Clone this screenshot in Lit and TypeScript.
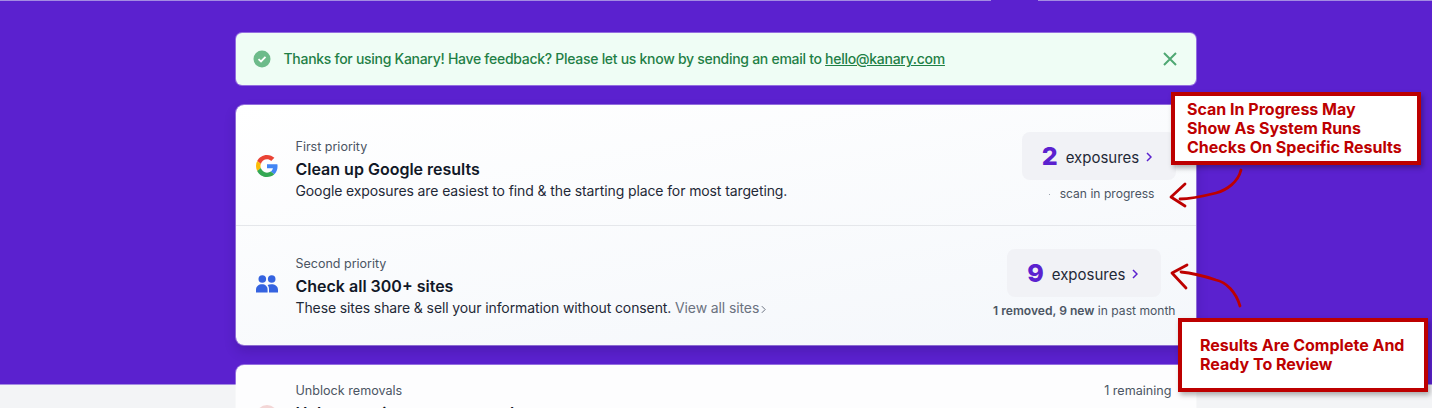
import { LitElement, css, html, svg } from "lit";
import { customElement } from "lit/decorators.js";

const chevron = (width: number, height: number, color: string, weight = 1.5) =>
  html`<svg width=${width} height=${height} viewBox="0 0 6 10" fill="none" stroke=${color} stroke-width=${weight}><path d="M1 1l4 4-4 4" /></svg>`;

const googleIcon = svg`
  <svg width="22" height="22" viewBox="0 0 48 48">
    <path fill="#EA4335" d="M24 9.500c3.500 0 6.700 1.200 9.200 3.600l6.900-6.900C35.900 2.400 30.500 0 24 0 14.600 0 6.500 5.400 2.600 13.200l8 6.200C12.400 13.700 17.700 9.500 24 9.500z"/>
    <path fill="#4285F4" d="M47 24.500c0-1.600-.1-3.100-.4-4.500H24v9h12.900c-.6 3-2.200 5.500-4.700 7.200l7.700 6C44.400 38 47 31.800 47 24.500z"/>
    <path fill="#FBBC05" d="M10.500 28.600c-.5-1.400-.8-3-.8-4.600s.3-3.200.8-4.600l-8-6.200C.9 16.500 0 20.100 0 24s.9 7.500 2.600 10.800l7.900-6.200z"/>
    <path fill="#34A853" d="M24 48c6.500 0 11.900-2.100 15.900-5.800l-7.700-6c-2.200 1.400-4.900 2.300-8.200 2.300-6.300 0-11.600-4.200-13.500-10l-8 6.200C6.500 42.600 14.600 48 24 48z"/>
  </svg>
`;

const peopleIcon = svg`
  <svg width="22" height="18" viewBox="0 0 22 18" fill="#3563e0">
    <circle cx="6.300" cy="4" r="3.800"/>
    <circle cx="15.700" cy="4" r="3.800"/>
    <path d="M0 17.500v-2.800C0 11.300 2.800 9.300 6 9.300s5.600 2 5.600 5.400v2.800z"/>
    <path d="M13 17.500v-3c0-1.800-.5-3.300-1.400-4.400 1-.5 2.300-.8 3.700-.8 3.700 0 6.700 2 6.700 5.400v2.800z"/>
  </svg>
`;

@customElement("app-root")
export class AppRoot extends LitElement {
  static styles = css`
    :host {
      display: block;
      height: 408px;
      overflow: hidden;
      position: relative;
      background: linear-gradient(#5b21cf 0 384px, #a48be2 384px 385px, #f3f4f6 385px);
      font-family: Inter, "Liberation Sans", sans-serif;
      color: #1f2937;
    }
    .top-line {
      position: absolute;
      top: 0;
      left: 0;
      right: 0;
      height: 1px;
      background: linear-gradient(90deg, #a48be2 0 991px, #5b21cf 991px 1038px, #a48be2 1038px);
    }
    .column {
      margin: 0 0 0 235.5px;
      padding-top: 32.5px;
      width: 960px;
      display: flex;
      flex-direction: column;
      gap: 20px;
    }
    .alert {
      height: 52px;
      box-sizing: border-box;
      padding: 0 17px;
      display: flex;
      align-items: center;
      background: #effdf5;
      border-radius: 6px;
      box-shadow: 0 0 0 1px rgba(255, 255, 255, 0.35);
      color: #1f8046;
      font-size: 14px;
      font-weight: 500;
      letter-spacing: -0.285px;
    }
    .alert-text {
      margin-left: 13px;
      flex: 1;
    }
    .alert a {
      color: inherit;
      text-decoration: underline;
    }
    .card {
      background: linear-gradient(170deg, #ffffff 0%, #f4f7fb 100%);
      border-radius: 8px;
      box-shadow: 0 0 0 1px rgba(255, 255, 255, 0.35), 0 6px 12px rgba(30, 10, 80, 0.22);
    }
    .row {
      display: flex;
      align-items: center;
      height: 120.500px;
      box-sizing: border-box;
      padding: 0 20px;
    }
    .row + .row {
      height: 120.300px;
      border-top: 1px solid #e5e7eb;
    }
    .row-icon {
      width: 40px;
      display: flex;
      align-items: center;
    }
    .row-icon.google {
      margin-top: 2px;
    }
    .row-icon.people {
      margin-top: -4px;
    }
    .row-body {
      flex: 1;
      display: flex;
      flex-direction: column;
    }
    .row-body.first {
      margin-top: 8px;
    }
    .eyebrow {
      font-size: 12.500px;
      line-height: 20px;
      color: #4b5563;
    }
    .title {
      font-size: 16px;
      font-weight: 600;
      line-height: 24px;
      color: #111827;
    }
    .desc {
      font-size: 14px;
      line-height: 20px;
      letter-spacing: -0.11px;
      color: #1f2937;
    }
    .view-all {
      color: #6b7280;
    }
    .view-all svg {
      margin-left: 2px;
      vertical-align: -1px;
    }
    .stat {
      display: flex;
      flex-direction: column;
      align-items: center;
      gap: 6px;
    }
    .stat.first {
      align-items: flex-end;
      margin-top: 5px;
    }
    .stat.first .stat-note {
      margin-right: 21px;
    }
    .stat.second {
      padding-bottom: 3px;
    }
    .stat-btn {
      display: flex;
      align-items: center;
      justify-content: center;
      height: 48px;
      width: 154px;
      box-sizing: border-box;
      padding-right: 3px;
      border-radius: 8px;
      background: #f1f2f6;
      color: #1f2937;
      font-size: 15px;
    }
    .stat-count {
      font-size: 25px;
      font-weight: 800;
      color: #5b21cf;
      margin-right: 8px;
    }
    .stat-label {
      margin-top: 2px;
    }
    .stat-btn svg {
      margin-left: 7px;
      margin-top: 2px;
    }
    .stat-note {
      font-size: 12.100px;
      line-height: 16px;
      color: #4b5563;
    }
    .stat-note b {
      font-weight: 600;
    }
    .dot {
      display: inline-block;
      width: 1px;
      height: 1px;
      background: #9ca3af;
      margin-right: 10px;
      vertical-align: middle;
    }
    .peek {
      height: 80px;
      box-sizing: border-box;
      padding: 16px 24px 0 60px;
      background: #fdfdfe;
      border-radius: 8px 8px 0 0;
      box-shadow: 0 0 0 1px rgba(255, 255, 255, 0.35);
      position: relative;
    }
    .peek-top {
      display: flex;
      justify-content: space-between;
      font-size: 12.600px;
      line-height: 20px;
      color: #4b5563;
    }
    .peek-title {
      font-size: 16px;
      font-weight: 600;
      line-height: 24px;
      color: #111827;
    }
    .peek-icon {
      position: absolute;
      left: 20px;
      top: 40px;
      width: 22px;
      height: 22px;
      border-radius: 50%;
      background: #f3d6d6;
    }
    .note {
      position: absolute;
      box-sizing: border-box;
      background: #fff;
      border: 4px solid #bd0000;
      box-shadow: 2px 3px 5px rgba(0, 0, 0, 0.3);
      color: #bd0000;
      font-size: 16px;
      font-weight: 700;
      line-height: 19px;
      display: flex;
      flex-direction: column;
      justify-content: center;
    }
    .note.scan {
      left: 1171px;
      top: 92px;
      width: 250px;
      height: 73px;
      padding-left: 12px;
    }
    .note.done {
      left: 1178px;
      top: 318px;
      width: 250px;
      height: 74px;
      padding-left: 18px;
    }
    .arrows {
      position: absolute;
      left: 0;
      top: 0;
      pointer-events: none;
    }
  `;

  render() {
    return html`
      <div class="top-line"></div>
      <div class="column">
        <div class="alert">
          <svg width="18" height="18" viewBox="0 0 18 18">
            <circle cx="9" cy="9" r="8.500" fill="#6dbb8a" />
            <path d="M5.500 9.200 8 11.500l4.500-4.600" fill="none" stroke="#fff" stroke-width="1.800" />
          </svg>
          <span class="alert-text">
            Thanks for using Kanary! Have feedback? Please let us know by sending an email to
            <a href="#">hello@kanary.com</a>
          </span>
          <svg width="18" height="18" viewBox="0 0 18 18" fill="none" stroke="#4fa873" stroke-width="2">
            <path d="M3 3 15 15M15 3 3 15" />
          </svg>
        </div>
        <div class="card">
          <div class="row">
            <div class="row-icon google">${googleIcon}</div>
            <div class="row-body first">
              <span class="eyebrow">First priority</span>
              <span class="title">Clean up Google results</span>
              <span class="desc">Google exposures are easiest to find &amp; the starting place for most targeting.</span>
            </div>
            <div class="stat first">
              <div class="stat-btn">
                <span class="stat-count">2</span><span class="stat-label">exposures</span>${chevron(6, 10, "#5b21cf")}
              </div>
              <div class="stat-note"><span class="dot"></span>scan in progress</div>
            </div>
          </div>
          <div class="row">
            <div class="row-icon people">${peopleIcon}</div>
            <div class="row-body">
              <span class="eyebrow">Second priority</span>
              <span class="title">Check all 300+ sites</span>
              <span class="desc">
                These sites share &amp; sell your information without consent.
                <span class="view-all">View all sites${chevron(5, 9, "#6b7280", 1.2)}</span>
              </span>
            </div>
            <div class="stat second">
              <div class="stat-btn">
                <span class="stat-count">9</span><span class="stat-label">exposures</span>${chevron(6, 10, "#5b21cf")}
              </div>
              <div class="stat-note"><b>1 removed, 9 new</b> in past month</div>
            </div>
          </div>
        </div>
        <div class="peek">
          <div class="peek-icon"></div>
          <div class="peek-top"><span>Unblock removals</span><span>1 remaining</span></div>
          <div class="peek-title">Help us review your removal</div>
        </div>
      </div>

      <svg class="arrows" width="1432" height="408" fill="none" stroke="#bd0000" stroke-width="2.800" stroke-linecap="round" stroke-linejoin="round">
        <path d="M1241 170c-3 12-14 20-25 23-12 3-24 6-36 6" />
        <path d="M1185 184 1171 197l14 9" />
        <path d="M1240 306c-4-14-14-24-24-26-12-4-24-7-35-8" />
        <path d="M1187 265 1172 273l14 15" />
      </svg>
      <div class="note scan">
        <span>Scan In Progress May</span>
        <span>Show As System Runs</span>
        <span>Checks On Specific Results</span>
      </div>
      <div class="note done">
        <span>Results Are Complete And</span>
        <span>Ready To Review</span>
      </div>
    `;
  }
}
